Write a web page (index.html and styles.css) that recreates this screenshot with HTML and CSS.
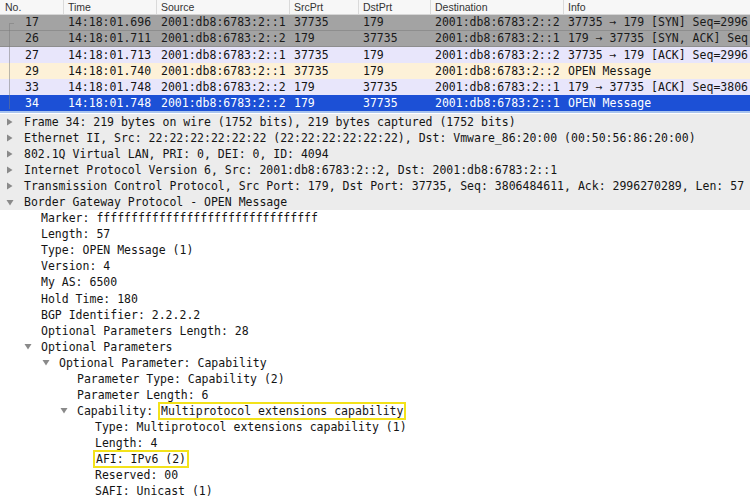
FILE: index.html
```html
<!DOCTYPE html>
<html>
<head>
<meta charset="utf-8">
<link rel="stylesheet" href="styles.css">
</head>
<body>
<div class="list">
  <div class="hdr">
    <div class="c c-no">No.</div>
    <div class="c">Time</div>
    <div class="c">Source</div>
    <div class="c">SrcPrt</div>
    <div class="c">DstPrt</div>
    <div class="c">Destination</div>
    <div class="c c-last">Info</div>
  </div>
  <div class="row r-gray">
    <div class="c c-no">17</div><div class="c">14:18:01.696</div><div class="c">2001:db8:6783:2::1</div><div class="c">37735</div><div class="c">179</div><div class="c">2001:db8:6783:2::2</div><div class="c c-last">37735 → 179 [SYN] Seq=2996</div>
  </div>
  <div class="row r-gray">
    <div class="c c-no">26</div><div class="c">14:18:01.711</div><div class="c">2001:db8:6783:2::2</div><div class="c">179</div><div class="c">37735</div><div class="c">2001:db8:6783:2::1</div><div class="c c-last">179 → 37735 [SYN, ACK] Seq</div>
  </div>
  <div class="row r-lav">
    <div class="c c-no">27</div><div class="c">14:18:01.713</div><div class="c">2001:db8:6783:2::1</div><div class="c">37735</div><div class="c">179</div><div class="c">2001:db8:6783:2::2</div><div class="c c-last">37735 → 179 [ACK] Seq=2996</div>
  </div>
  <div class="row r-yel">
    <div class="c c-no">29</div><div class="c">14:18:01.740</div><div class="c">2001:db8:6783:2::1</div><div class="c">37735</div><div class="c">179</div><div class="c">2001:db8:6783:2::2</div><div class="c c-last">OPEN Message</div>
  </div>
  <div class="row r-lav">
    <div class="c c-no">33</div><div class="c">14:18:01.748</div><div class="c">2001:db8:6783:2::2</div><div class="c">179</div><div class="c">37735</div><div class="c">2001:db8:6783:2::1</div><div class="c c-last">179 → 37735 [ACK] Seq=3806</div>
  </div>
  <div class="row r-sel">
    <div class="c c-no">34</div><div class="c">14:18:01.748</div><div class="c">2001:db8:6783:2::2</div><div class="c">179</div><div class="c">37735</div><div class="c">2001:db8:6783:2::1</div><div class="c c-last">OPEN Message</div>
  </div>
  <div class="related"></div>
</div>
<div class="sep"></div>
<div class="tree">
  <div class="ln top l0"><span class="tw"><svg width="7" height="8" viewBox="0 0 7 8"><path d="M1 0.5 L6.5 4 L1 7.5 Z" fill="#8a8a8a"/></svg></span>Frame 34: 219 bytes on wire (1752 bits), 219 bytes captured (1752 bits)</div>
  <div class="ln top l0"><span class="tw"><svg width="7" height="8" viewBox="0 0 7 8"><path d="M1 0.5 L6.5 4 L1 7.5 Z" fill="#8a8a8a"/></svg></span>Ethernet II, Src: 22:22:22:22:22:22 (22:22:22:22:22:22), Dst: Vmware_86:20:00 (00:50:56:86:20:00)</div>
  <div class="ln top l0"><span class="tw"><svg width="7" height="8" viewBox="0 0 7 8"><path d="M1 0.5 L6.5 4 L1 7.5 Z" fill="#8a8a8a"/></svg></span>802.1Q Virtual LAN, PRI: 0, DEI: 0, ID: 4094</div>
  <div class="ln top l0"><span class="tw"><svg width="7" height="8" viewBox="0 0 7 8"><path d="M1 0.5 L6.5 4 L1 7.5 Z" fill="#8a8a8a"/></svg></span>Internet Protocol Version 6, Src: 2001:db8:6783:2::2, Dst: 2001:db8:6783:2::1</div>
  <div class="ln top l0"><span class="tw"><svg width="7" height="8" viewBox="0 0 7 8"><path d="M1 0.5 L6.5 4 L1 7.5 Z" fill="#8a8a8a"/></svg></span>Transmission Control Protocol, Src Port: 179, Dst Port: 37735, Seq: 3806484611, Ack: 2996270289, Len: 57</div>
  <div class="ln top l0"><span class="tw"><svg width="8" height="7" viewBox="0 0 8 7"><path d="M0.5 1 L7.5 1 L4 6.5 Z" fill="#8a8a8a"/></svg></span>Border Gateway Protocol - OPEN Message</div>
  <div class="ln l1">Marker: ffffffffffffffffffffffffffffffff</div>
  <div class="ln l1">Length: 57</div>
  <div class="ln l1">Type: OPEN Message (1)</div>
  <div class="ln l1">Version: 4</div>
  <div class="ln l1">My AS: 6500</div>
  <div class="ln l1">Hold Time: 180</div>
  <div class="ln l1">BGP Identifier: 2.2.2.2</div>
  <div class="ln l1">Optional Parameters Length: 28</div>
  <div class="ln l1"><span class="tw"><svg width="8" height="7" viewBox="0 0 8 7"><path d="M0.5 1 L7.5 1 L4 6.5 Z" fill="#8a8a8a"/></svg></span>Optional Parameters</div>
  <div class="ln l2"><span class="tw"><svg width="8" height="7" viewBox="0 0 8 7"><path d="M0.5 1 L7.5 1 L4 6.5 Z" fill="#8a8a8a"/></svg></span>Optional Parameter: Capability</div>
  <div class="ln l3">Parameter Type: Capability (2)</div>
  <div class="ln l3">Parameter Length: 6</div>
  <div class="ln l3"><span class="tw"><svg width="8" height="7" viewBox="0 0 8 7"><path d="M0.5 1 L7.5 1 L4 6.5 Z" fill="#8a8a8a"/></svg></span>Capability: <span class="hl">Multiprotocol extensions capability</span></div>
  <div class="ln l4">Type: Multiprotocol extensions capability (1)</div>
  <div class="ln l4">Length: 4</div>
  <div class="ln l4"><span class="hl hl2">AFI: IPv6 (2)</span></div>
  <div class="ln l4">Reserved: 00</div>
  <div class="ln l4">SAFI: Unicast (1)</div>
</div>
</body>
</html>
```
FILE: styles.css
```css
* { box-sizing: border-box; }
html, body { margin: 0; padding: 0; }
body {
  width: 750px;
  height: 502px;
  overflow: hidden;
  background: #ffffff;
  font-family: "DejaVu Sans Mono", "Liberation Mono", monospace;
  font-size: 11.5px;
  color: #141414;
}
.list {
  position: relative;
}
.hdr, .row {
  display: grid;
  grid-template-columns: 63px 93px 133px 69px 72px 133px 1fr;
  white-space: nowrap;
  overflow: hidden;
}
.hdr {
  height: 15px;
  background: #f7f7f7;
  border-bottom: 1px solid #d6d6d6;
  font-family: "Liberation Sans", Arial, sans-serif;
  font-size: 10.5px;
  color: #333;
  line-height: 14px;
}
.hdr .c {
  border-left: 1px solid #dadada;
  padding-left: 4px;
  overflow: hidden;
}
.hdr .c-no { border-left: none; padding-left: 5px; }
.row {
  height: 16px;
  line-height: 16px;
}
.row .c {
  padding-left: 5px;
  overflow: hidden;
}
.row .c-no { padding-left: 25px; }
.r-gray { background: #a3a3a3; color: #1a1a1a; border-bottom: 1px solid #8e8e8e; line-height: 15px; }
.r-lav { background: #e8e6fb; }
.r-yel { background: #fdf1d8; }
.r-sel { background: #1c50d6; color: #ffffff; }
.related {
  position: absolute;
  left: 9px;
  top: 23px;
  width: 5px;
  height: 86px;
  border-left: 1px solid #7a7a7a;
  border-top: 1px solid #7a7a7a;
  opacity: 0.5;
}
.sep {
  height: 2px;
  background: #a9c4ee;
}
.tree {
  white-space: nowrap;
  padding-top: 1px;
}
.ln {
  height: 16.05px;
  line-height: 16px;
  position: relative;
}
.top { background: #ececec; }
.l0 { padding-left: 24px; }
.l1 { padding-left: 41px; }
.l2 { padding-left: 59px; }
.l3 { padding-left: 77px; }
.l4 { padding-left: 95px; }
.tw {
  position: absolute;
  top: 0;
  height: 16px;
  display: flex;
  align-items: center;
  margin-left: -17px;
}
.l0 .tw { margin-left: -18px; }
.hl {
  outline: 2px solid #f3e21a;
  outline-offset: 0px;
  padding: 0 1px;
}
```
